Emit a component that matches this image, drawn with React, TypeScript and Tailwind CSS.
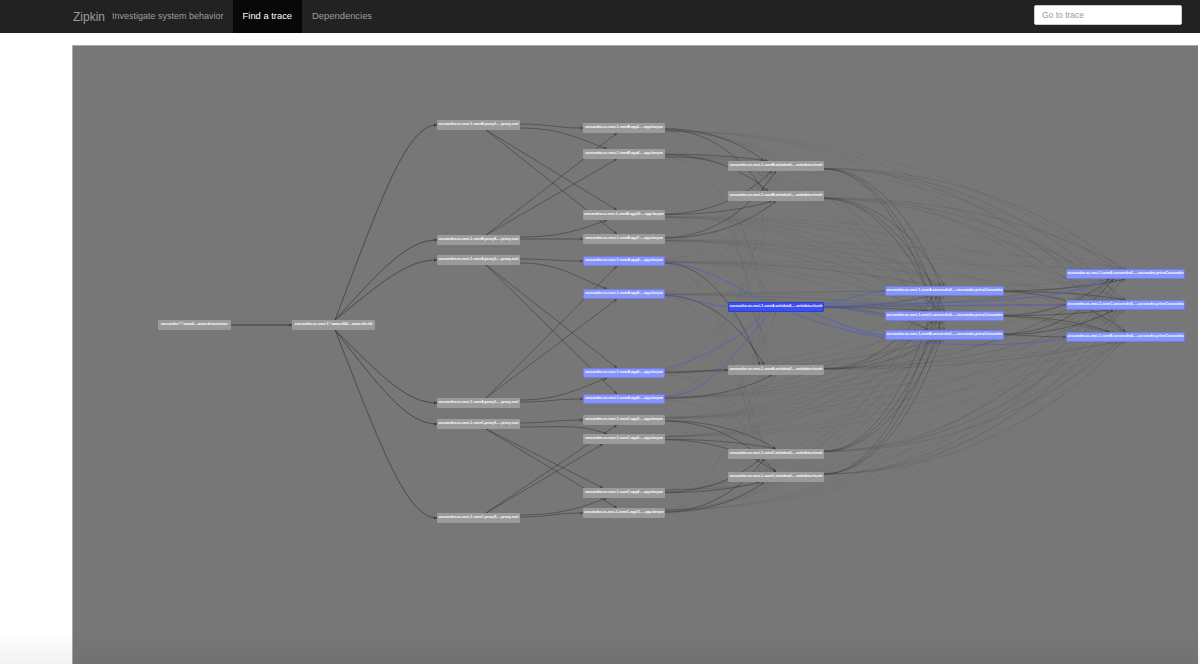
import { useMemo } from "react"

type Tone = "gray" | "blue" | "active"

type GraphNode = {
  id: string
  label: string
  x0: number
  x1: number
  y: number
  tone: Tone
}

type Edge = {
  from: string
  to: string
  opacity: number
  width?: number
}

// graph coordinates are page pixels, the canvas starts here
const ORIGIN_X = 73
const ORIGIN_Y = 45
const NODE_H = 10
const EDGE = "#2e2e2e"
const BLUE = "#4a5cd6"

const node = (id: string, label: string, x0: number, x1: number, y: number, tone: Tone = "gray"): GraphNode => ({
  id,
  label,
  x0,
  x1,
  y,
  tone,
})

const proxy = (id: string, zone: string, n: number, y: number) =>
  node(id, `cassandra.us-east-1.zone${zone}.proxy${n}-....proxy.zuul`, 437, 520, y)

const app = (id: string, zone: string, n: number, y: number, tone: Tone = "gray") =>
  node(id, `cassandra.us-east-1.zone${zone}.app${n}-....app.karyon`, 583, 665, y, tone)

const web = (id: string, zone: string, n: number, y: number, tone: Tone = "gray") =>
  node(id, `cassandra.us-east-1.zone${zone}.webdata${n}-....webdata.elsash`, 728, 824, y, tone)

const db = (id: string, zone: string, n: number, x0: number, y: number) =>
  node(id, `cassandra.us-east-1.zone${zone}.cassandra${n}-....cassandra.prismCassandra`, x0, x0 + 119, y, "blue")

const nodes: GraphNode[] = [
  node("dns", "cassandra.*.*.www0....www.denominator", 158, 231, 324),
  node("elb", "cassandra.us-east-1.*.www-alb0....www-alb.elb", 292, 375, 324),
  proxy("p1", "B", 1, 124),
  proxy("p2", "B", 4, 239),
  proxy("p3", "A", 3, 259),
  proxy("p4", "A", 1, 402),
  proxy("p5", "C", 5, 423),
  proxy("p6", "C", 9, 517),
  app("a1", "B", 1, 127),
  app("a2", "B", 4, 153),
  app("a3", "B", 10, 214),
  app("a4", "B", 7, 238),
  app("a5", "A", 4, 260, "blue"),
  app("a6", "A", 9, 293, "blue"),
  app("a7", "A", 6, 372, "blue"),
  app("a8", "A", 8, 398, "blue"),
  app("a9", "C", 3, 419),
  app("a10", "C", 5, 438),
  app("a11", "C", 4, 492),
  app("a12", "C", 11, 512),
  web("w1", "B", 0, 165),
  web("w2", "B", 1, 195),
  web("w3", "A", 5, 306, "active"),
  web("w4", "A", 2, 369),
  web("w5", "C", 2, 453),
  web("w6", "C", 0, 476),
  db("d1", "A", 3, 885, 290),
  db("d2", "C", 3, 885, 315),
  db("d3", "B", 1, 885, 334),
  db("e1", "A", 5, 1066, 273),
  db("e2", "C", 5, 1066, 304),
  db("e3", "B", 4, 1066, 336),
]

const byId = Object.fromEntries(nodes.map((n) => [n.id, n]))

const cross = (froms: string[], tos: string[], opacity: number, width?: number): Edge[] =>
  froms.flatMap((from) => tos.map((to) => ({ from, to, opacity, width })))

const apps = ["a1", "a2", "a3", "a4", "a5", "a6", "a7", "a8", "a9", "a10", "a11", "a12"]
const webs = ["w1", "w2", "w3", "w4", "w5", "w6"]
const dbs = ["d1", "d2", "d3"]
const edgeDbs = ["e1", "e2", "e3"]

const proxyEdges: Edge[] = [
  ...cross(["p1", "p2"], ["a1", "a2", "a3", "a4"], 0.62),
  ...cross(["p3", "p4"], ["a5", "a6", "a7", "a8"], 0.62),
  ...cross(["p5", "p6"], ["a9", "a10", "a11", "a12"], 0.62),
]

const sweepEdges: Edge[] = [
  // faint long range traffic goes underneath
  ...cross(apps, edgeDbs, 0.09),
  ...cross(apps, dbs, 0.11),
  ...cross(["a1", "a2", "a3", "a4", "a9", "a10", "a11", "a12"], ["w3", "w4"], 0.07),
  ...cross(["a5", "a6", "a7", "a8"], ["w1", "w2", "w5", "w6"], 0.06),
  ...cross(webs, edgeDbs, 0.2),
  ...cross(webs, dbs, 0.36),
  ...cross(dbs, edgeDbs, 0.55),
  ...cross(["a1", "a2", "a3", "a4"], ["w1", "w2"], 0.6),
  ...cross(["a5", "a6", "a7", "a8"], ["w4"], 0.6),
  ...cross(["a9", "a10", "a11", "a12"], ["w5", "w6"], 0.6),
]

// the highlighted trace, routed by hand in page coordinates
const blueRoutes = [
  "M665 260 C705 266 735 285 765 301",
  "M665 293 C690 298 710 304 728 306",
  "M665 368 C695 360 740 340 765 311",
  "M665 396 C710 394 735 350 771 311",
  "M824 303 C845 300 865 291 885 290",
  "M824 306 C850 306 870 313 885 315",
  "M810 311 C840 322 860 332 885 334",
  "M824 303 C950 303 1050 302 1110 279",
  "M824 305 C900 306 1000 303 1066 304",
  "M790 311 C860 340 960 352 1066 338",
]

const sum = (s: string) => [...s].reduce((acc, c) => acc + c.charCodeAt(0), 0)

const px = (x: number) => x - ORIGIN_X
const py = (y: number) => y - ORIGIN_Y

// cubic from a to b, the tip angle comes from the last control point
function curve(sx: number, sy: number, c1x: number, c1y: number, c2x: number, c2y: number, tx: number, ty: number) {
  return {
    d: `M${px(sx)} ${py(sy)} C${px(c1x)} ${py(c1y)} ${px(c2x)} ${py(c2y)} ${px(tx)} ${py(ty)}`,
    tip: { x: px(tx), y: py(ty), angle: (Math.atan2(ty - c2y, tx - c2x) * 180) / Math.PI },
  }
}

// proxies: far apps get a straight line from the box centre, near ones a short bend
function proxyPath(a: GraphNode, b: GraphNode) {
  const dy = b.y - a.y
  const dir = Math.sign(dy)
  if (Math.abs(dy) >= 50) {
    const sx = 486
    const sy = a.y + dir * 5
    const tx = 617 - (Math.abs(dy) < 80 ? 14 : 0)
    const ty = b.y - dir * 5
    return curve(sx, sy, sx + (tx - sx) / 3, sy + (ty - sy) / 3, tx - (tx - sx) / 3, ty - (ty - sy) / 3, tx, ty)
  }
  if (Math.abs(dy) >= 14) {
    const sy = a.y + dir * 3
    const ty = b.y - dir * 5
    return curve(a.x1, sy, a.x1 + 40, sy, 580, ty - dir * 10, 607, ty)
  }
  return curve(a.x1, a.y - 1, a.x1 + 30, a.y - 1, b.x0 - 30, b.y, b.x0, b.y)
}

// everything right of the apps: leaves flat on the right edge, drops onto the top or bottom of the target
function sweepPath(a: GraphNode, b: GraphNode) {
  const dy = b.y - a.y
  const dir = Math.sign(dy)
  const sy = a.y + Math.max(-3, Math.min(3, dy * 0.02))
  if (Math.abs(dy) < 8) {
    return curve(a.x1, sy, a.x1 + 25, sy, b.x0 - 25, b.y, b.x0, b.y)
  }
  const cx = (b.x0 + b.x1) / 2
  const tx = cx - 8 + ((sum(a.id) % 5) - 2) * 4
  const ty = b.y - dir * 5
  const dx = tx - a.x1
  return curve(a.x1, sy, a.x1 + dx * 0.45, sy, tx - dx * 0.2, ty - (ty - sy) * 0.5, tx, ty)
}

// the load balancer fans out steeply and lands flat on each proxy
function fanPath(to: GraphNode) {
  const sy = to.y < 324 ? 319 : 329
  const dx = to.x0 - 335
  const dy = to.y - sy
  return curve(335, sy, 335 + dx * 0.45, sy + dy * 0.62, to.x0 - dx * 0.3, to.y, to.x0, to.y)
}

function Arrow({ x, y, angle, fill }: { x: number; y: number; angle: number; fill?: string }) {
  return <path d="M-3 -1.5 L0 0 L-3 1.5 Z" fill={fill} stroke="none" transform={`translate(${x} ${y}) rotate(${angle})`} />
}

function DependencyGraph() {
  const lines = useMemo(
    () => [
      ...sweepEdges.map((e) => ({ ...e, ...sweepPath(byId[e.from], byId[e.to]) })),
      ...proxyEdges.map((e) => ({ ...e, ...proxyPath(byId[e.from], byId[e.to]) })),
      ...["p1", "p2", "p3", "p4", "p5", "p6"].map((id) => ({ opacity: 0.8, width: 0.75, ...fanPath(byId[id]) })),
      { opacity: 0.75, width: 1.1, ...curve(231, 324, 250, 324, 270, 324, 292, 324) },
    ],
    [],
  )

  return (
    <svg className="absolute inset-0 h-full w-full" viewBox="0 0 1125 618" fill="none">
      {lines.map((l, i) => (
        <g key={i} opacity={l.opacity}>
          <path d={l.d} stroke={EDGE} strokeWidth={l.width ?? 0.75} />
          <Arrow x={l.tip.x} y={l.tip.y} angle={l.tip.angle} fill={EDGE} />
        </g>
      ))}
      <g transform={`translate(${-ORIGIN_X} ${-ORIGIN_Y})`} opacity={0.8}>
        {blueRoutes.map((d) => (
          <path key={d} d={d} stroke={BLUE} strokeWidth={0.8} />
        ))}
      </g>
    </svg>
  )
}

const toneClass: Record<Tone, string> = {
  gray: "bg-[#9a9a9a]",
  blue: "bg-[#8794f8] border border-[#6f7de0]",
  active: "bg-[#3f50f2] border border-[#2f3fc4]",
}

function GraphLabel({ item }: { item: GraphNode }) {
  return (
    <div
      className={`absolute flex h-[10px] items-center justify-center overflow-hidden whitespace-nowrap rounded-[1px] text-[3.5px] font-bold leading-none text-white ${toneClass[item.tone]}`}
      style={{
        left: item.x0 - ORIGIN_X,
        top: item.y - NODE_H / 2 - ORIGIN_Y,
        width: item.x1 - item.x0,
      }}
    >
      {item.label}
    </div>
  )
}

export default function App() {
  return (
    <div className="relative h-[664px] overflow-hidden bg-white font-['Liberation_Sans',Arial,sans-serif]">
      <nav className="flex h-[33px] items-stretch bg-[#222222] pl-[73px] pr-[18px]">
        <div className="flex items-center">
          <span className="text-[12px] text-[#9d9d9d]">Zipkin</span>
          <span className="ml-[7px] text-[9px] text-[#9d9d9d]">Investigate system behavior</span>
        </div>
        <a className="ml-[9px] flex items-center bg-[#080808] px-[10px] text-[9.4px] text-white">Find a trace</a>
        <a className="flex items-center px-[10px] text-[9.4px] text-[#9d9d9d]">Dependencies</a>
        <div className="ml-auto flex items-start pt-[5px]">
          <input
            className="h-[20px] w-[148px] rounded-[2px] border border-[#cccccc] bg-white px-[7px] text-[8.5px] placeholder:text-[#999999]"
            placeholder="Go to trace"
          />
        </div>
      </nav>
      <main className="pl-[72px] pr-[2px] pt-[12px]">
        <div className="relative h-[619px] overflow-hidden border-l border-t border-[#aaaaaa] bg-[#777777]">
          <DependencyGraph />
          {nodes.map((n) => (
            <GraphLabel key={n.id} item={n} />
          ))}
        </div>
      </main>
      <div className="pointer-events-none absolute inset-x-0 bottom-0 h-[34px] bg-gradient-to-b from-transparent to-black/5" />
    </div>
  )
}
